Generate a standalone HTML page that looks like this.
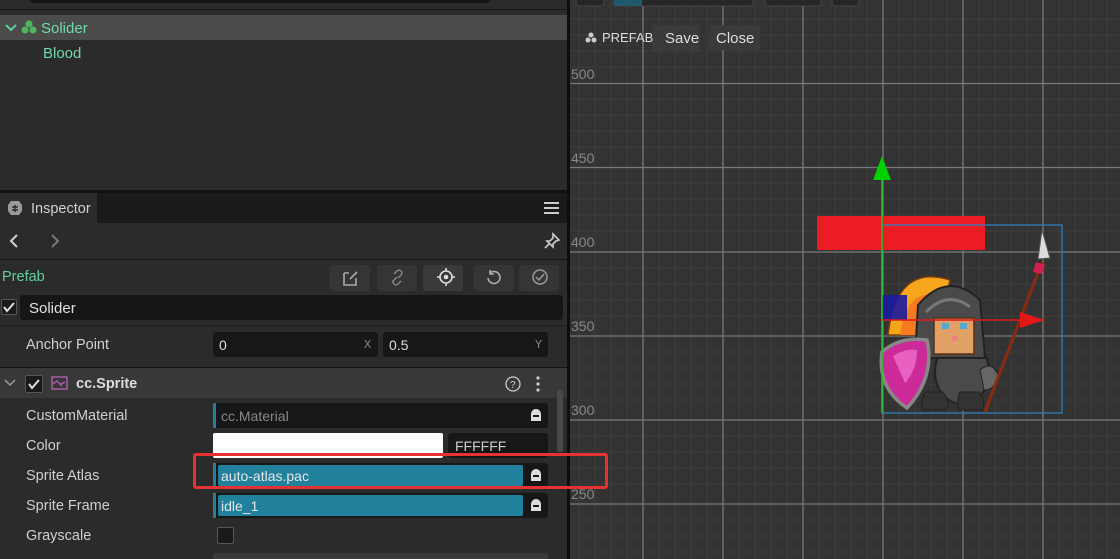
<!DOCTYPE html>
<html><head><meta charset="utf-8"><style>
*{box-sizing:border-box;margin:0;padding:0}
html,body{width:1120px;height:559px;overflow:hidden}
body{background:#2b2b2b;font-family:"Liberation Sans",Arial,sans-serif;font-size:14px;color:#ccc;position:relative}
.a{position:absolute}
.lbl{position:absolute;left:26px;font-size:14.5px;color:#cfcfcf}
.inp{position:absolute;background:#171717;border-radius:3px}
.btn{position:absolute;top:265px;width:40px;height:26px;background:#353535;border-radius:3px}
</style></head><body>
<div class="a" style="left:0;top:0;width:567px;height:559px;background:#2b2b2b"></div>
<div class="a" style="left:30px;top:0;width:460px;height:3px;background:#151515;border-radius:0 0 3px 3px"></div>
<div class="a" style="left:0;top:9px;width:567px;height:1px;background:#181818"></div>
<div class="a" style="left:0;top:15px;width:567px;height:25px;background:#4b4b4b"></div>
<svg class="a" style="left:5px;top:23px" width="12" height="10"><path d="M1 2 L6 7 L11 2" stroke="#5fcf9a" stroke-width="2" fill="none"/></svg>
<svg class="a" style="left:21px;top:19px" width="16" height="17"><circle cx="8" cy="5" r="3.5" fill="#4fb55f"/><circle cx="4" cy="11" r="3.5" fill="#4fb55f"/><circle cx="12" cy="11" r="3.5" fill="#4fb55f"/></svg>
<div class="a" style="left:41px;top:20px;font-size:15px;color:#6fd9a8">Solider</div>
<div class="a" style="left:43px;top:45px;font-size:15px;color:#6fd9a8">Blood</div>
<div class="a" style="left:0;top:190px;width:567px;height:3px;background:#121212"></div>
<div class="a" style="left:0;top:193px;width:567px;height:30px;background:#1a1a1a"></div>
<div class="a" style="left:0;top:193px;width:97px;height:30px;background:#2b2b2b"></div>
<svg class="a" style="left:7px;top:200px" width="16" height="16"><path d="M4 1h8l3 4v6l-3 4h-8l-3-4v-6z" fill="#9a9a9a"/><path d="M5 7h6M5 10h6M8 5v7" stroke="#2b2b2b" stroke-width="1.4"/></svg>
<div class="a" style="left:31px;top:201px;font-size:14.5px;color:#d0d0d0">Inspector</div>
<div class="a" style="left:544px;top:202px;width:15px;height:2px;background:#ccc;box-shadow:0 5px 0 #ccc,0 10px 0 #ccc"></div>
<svg class="a" style="left:6px;top:232px" width="60" height="18"><path d="M11 3 L5 9 L11 15" stroke="#cfcfcf" stroke-width="2" fill="none"/><path d="M46 3 L52 9 L46 15" stroke="#777" stroke-width="2" fill="none"/></svg>
<svg class="a" style="left:543px;top:232px" width="18" height="18"><path d="M10 2l6 6-3 1-3 3 0 3-6-6 3 0 3-3z M6 12l-4 4" stroke="#ccc" stroke-width="1.6" fill="none"/></svg>
<div class="a" style="left:0;top:259px;width:567px;height:1px;background:#141414"></div>
<div class="a" style="left:2px;top:269px;font-size:14.5px;color:#5fcf9a">Prefab</div>
<div class="btn" style="left:330px"></div><div class="btn" style="left:377px"></div><div class="btn" style="left:423px;background:#3a3a3a"></div><div class="btn" style="left:474px"></div><div class="btn" style="left:519px"></div>
<svg class="a" style="left:330px;top:265px" width="230" height="26">
<path d="M14 8h5M14 8v12h12v-7M20 14l7-7" stroke="#aaa" stroke-width="1.6" fill="none"/>
<path d="M62 17l5-5M64 9l3-3a2 2 0 0 1 4 4l-3 3M71 16l-3 3a2 2 0 0 1-4-4l3-3" stroke="#888" stroke-width="1.4" fill="none"/>
<circle cx="116" cy="12" r="6" stroke="#ddd" stroke-width="1.6" fill="none"/><circle cx="116" cy="12" r="2.3" fill="#ddd"/><path d="M116 3v3M116 18v3M107 12h3M122 12h3" stroke="#ddd" stroke-width="1.6"/>
<path d="M160 8a6 6 0 1 1-2 5M160 5v4h4" stroke="#aaa" stroke-width="1.6" fill="none"/>
<circle cx="210" cy="12" r="7" stroke="#999" stroke-width="1.5" fill="none"/><path d="M206 12l3 3 5-6" stroke="#999" stroke-width="1.5" fill="none"/>
</svg>
<div class="a" style="left:1px;top:299px;width:16px;height:16px;background:#1a1a1a;border:1px solid #555;border-radius:2px"></div>
<svg class="a" style="left:2px;top:300px" width="14" height="14"><path d="M2 7l3 4 7-8" stroke="#ddd" stroke-width="2" fill="none"/></svg>
<div class="inp" style="left:20px;top:295px;width:543px;height:25px;background:#161616"></div>
<div class="a" style="left:29px;top:300px;font-size:15px;color:#e0e0e0">Solider</div>
<div class="a" style="left:0;top:325px;width:567px;height:1px;background:#1e1e1e"></div>
<div class="lbl" style="top:337px">Anchor Point</div>
<div class="inp" style="left:213px;top:332px;width:165px;height:25px"></div>
<div class="inp" style="left:383px;top:332px;width:165px;height:25px"></div>
<div class="a" style="left:219px;top:337px;color:#ddd">0</div><div class="a" style="left:364px;top:338px;color:#888;font-family:'Liberation Mono';font-size:12px">X</div>
<div class="a" style="left:389px;top:337px;color:#ddd">0.5</div><div class="a" style="left:535px;top:338px;color:#888;font-family:'Liberation Mono';font-size:12px">Y</div>
<div class="a" style="left:0;top:367px;width:567px;height:1px;background:#141414"></div>
<div class="a" style="left:0;top:368px;width:567px;height:30px;background:#383838"></div>
<svg class="a" style="left:4px;top:378px" width="12" height="10"><path d="M1 2 L6 7 L11 2" stroke="#999" stroke-width="1.5" fill="none"/></svg>
<div class="a" style="left:25px;top:375px;width:18px;height:18px;background:#1a1a1a;border:1px solid #555;border-radius:2px"></div>
<svg class="a" style="left:27px;top:377px" width="14" height="14"><path d="M2 7l3 4 7-8" stroke="#ddd" stroke-width="2" fill="none"/></svg>
<svg class="a" style="left:51px;top:376px" width="18" height="15"><rect x="1" y="1" width="15" height="12" stroke="#b060b0" stroke-width="1.4" fill="none"/><path d="M2 8l4-3 5 5M10 8l4-2" stroke="#b060b0" stroke-width="1.3" fill="none"/></svg>
<div class="a" style="left:76px;top:376px;font-weight:bold;font-size:14.5px;color:#ddd">cc.Sprite</div>
<svg class="a" style="left:504px;top:375px" width="40" height="18"><circle cx="9" cy="9" r="7" stroke="#ccc" stroke-width="1.3" fill="none"/><text x="6" y="13" font-size="10" fill="#ccc" font-family="Liberation Sans">?</text><circle cx="34" cy="3" r="1.6" fill="#ccc"/><circle cx="34" cy="9" r="1.6" fill="#ccc"/><circle cx="34" cy="15" r="1.6" fill="#ccc"/></svg>
<div class="a" style="left:557px;top:390px;width:6px;height:62px;background:#4a4a4a;border-radius:2px"></div>
<div class="lbl" style="top:408px">CustomMaterial</div>
<div class="inp" style="left:213px;top:403px;width:335px;height:25px"></div>
<div class="a" style="left:213px;top:403px;width:3px;height:25px;background:#2a7f99;border-radius:2px 0 0 2px"></div>
<div class="a" style="left:221px;top:408px;color:#888">cc.Material</div>
<div class="lbl" style="top:438px">Color</div>
<div class="a" style="left:213px;top:433px;width:230px;height:25px;background:#fff;border-radius:2px"></div>
<div class="inp" style="left:448px;top:433px;width:100px;height:25px"></div>
<div class="a" style="left:455px;top:438px;color:#ccc">FFFFFF</div>
<div class="lbl" style="top:468px">Sprite Atlas</div>
<div class="inp" style="left:213px;top:463px;width:335px;height:25px"></div>
<div class="a" style="left:213px;top:463px;width:3px;height:25px;background:#2a7f99"></div>
<div class="a" style="left:218px;top:465px;width:305px;height:21px;background:#21809c;border-radius:2px"></div>
<div class="a" style="left:221px;top:468px;color:#e6e6e6">auto-atlas.pac</div>
<div class="lbl" style="top:498px">Sprite Frame</div>
<div class="inp" style="left:213px;top:493px;width:335px;height:25px"></div>
<div class="a" style="left:213px;top:493px;width:3px;height:25px;background:#2a7f99"></div>
<div class="a" style="left:218px;top:495px;width:305px;height:21px;background:#21809c;border-radius:2px"></div>
<div class="a" style="left:221px;top:498px;color:#e6e6e6">idle_1</div>
<svg class="a" style="left:529px;top:408px" width="14" height="110"><g fill="#ddd"><path d="M2 6a5 5 0 0 1 10 0v7h-10z"/><path d="M2 66a5 5 0 0 1 10 0v7h-10z"/><path d="M2 96a5 5 0 0 1 10 0v7h-10z"/></g><g fill="#171717"><rect x="4" y="7" width="6" height="2"/><rect x="4" y="67" width="6" height="2"/><rect x="4" y="97" width="6" height="2"/></g></svg>
<div class="lbl" style="top:528px">Grayscale</div>
<div class="a" style="left:217px;top:527px;width:17px;height:17px;background:#1a1a1a;border:1px solid #555;border-radius:2px"></div>
<div class="inp" style="left:213px;top:553px;width:335px;height:10px;background:#3a3a3a"></div>
<div class="a" style="left:567px;top:0;width:3px;height:559px;background:#0e0e0e"></div>
<svg class="a" style="left:570px;top:0" width="550" height="559">
<rect width="550" height="559" fill="#333"/>
<g stroke="#3d3d3d" stroke-width="1">
<path d="M9 0V559M25 0V559M41 0V559M57 0V559M89 0V559M105 0V559M121 0V559M137 0V559M169 0V559M185 0V559M201 0V559M217 0V559M249 0V559M265 0V559M281 0V559M297 0V559M329 0V559M345 0V559M361 0V559M377 0V559M409 0V559M425 0V559M441 0V559M457 0V559M489 0V559M505 0V559M521 0V559M537 0V559"/>
<path d="M0 19H550M0 35H550M0 51H550M0 67H550M0 99H550M0 115H550M0 131H550M0 147H550M0 183H550M0 199H550M0 215H550M0 231H550M0 268H550M0 284H550M0 300H550M0 316H550M0 352H550M0 368H550M0 384H550M0 400H550M0 436H550M0 452H550M0 468H550M0 484H550M0 520H550M0 536H550M0 552H550"/>
</g>
<g stroke="#7a7a7a" stroke-width="1.3">
<path d="M73 0V559M153 0V559M233 0V559M313 0V559M393 0V559M473 0V559"/>
<path d="M0 83.5H550M0 167.5H550M0 252H550M0 336H550M0 420H550M0 504H550"/>
</g>
<g fill="#888" font-family="Liberation Sans" font-size="14"><text x="1" y="79">500</text><text x="1" y="163">450</text><text x="1" y="247">400</text><text x="1" y="331">350</text><text x="1" y="415">300</text><text x="1" y="499">250</text></g>
<g fill="#262626" stroke="#444"><rect x="6" y="-4" width="28" height="10" rx="3"/><rect x="43" y="-4" width="140" height="10" rx="3"/><rect x="195" y="-4" width="56" height="10" rx="3"/><rect x="262" y="-4" width="27" height="10" rx="3"/></g>
<rect x="44" y="-4" width="28" height="10" fill="#1e5a6c"/>
<rect x="82" y="25" width="48" height="25" rx="2" fill="#3a3a3a"/><rect x="139" y="25" width="51" height="25" rx="2" fill="#3a3a3a"/>
<g fill="#ccc"><circle cx="21" cy="35" r="2.5"/><circle cx="18" cy="40" r="2.5"/><circle cx="24" cy="40" r="2.5"/></g>
<g font-family="Liberation Sans" fill="#ddd"><text x="32" y="42" font-size="13">PREFAB</text><text x="95" y="43" font-size="15">Save</text><text x="146" y="43" font-size="15">Close</text></g>
<rect x="247" y="216" width="168" height="34" fill="#ec1c24"/>
<rect x="312" y="225" width="180" height="188" fill="none" stroke="#2b80c0" stroke-width="1.3"/>
<path d="M318 335 q8-72 62-55 l-12 55z" fill="#f6a61a" stroke="#7a3a10" stroke-width="1.5"/>
<path d="M330 335 q6-45 35-40 l-6 40z" fill="#f47b20"/>
<ellipse cx="392" cy="372" rx="27" ry="32" fill="#4a4a4a" stroke="#222" stroke-width="2"/>
<path d="M348 305 q30-35 62 -5 l5 58 h-70z" fill="#4a4a4a" stroke="#222" stroke-width="2"/>
<path d="M356 312 q22-22 44 -5" stroke="#777" stroke-width="3" fill="none"/>
<rect x="364" y="318" width="40" height="36" fill="#e0a066" stroke="#5a3010" stroke-width="1.5"/>
<rect x="372" y="323" width="7" height="6" fill="#5ac"/><rect x="390" y="323" width="7" height="6" fill="#5ac"/>
<rect x="382" y="336" width="6" height="5" fill="#f08080"/>
<path d="M410 370 q12-10 18 5 q-2 15 -14 15z" fill="#666" stroke="#222"/>
<path d="M356 392 q-8 12 -2 18h22q5-8 -3-18z M390 392 q-5 12 0 18h22q5-8 -3-18z" fill="#333" stroke="#222"/>
<path d="M312 352 q18-16 45-12 q8 38 -20 68 q-30-20 -25-56z" fill="#cc2a99" stroke="#888" stroke-width="3.5"/>
<path d="M323 356 q12-8 24-6 q0 20 -12 33z" fill="#e860c0"/>
<path d="M472 230 l8 28 -12 1z" fill="#ddd" stroke="#555"/>
<path d="M472 262 l-57 150" stroke="#8a2a10" stroke-width="3"/>
<path d="M466 262 l9 3 -3 9 -9-2z" fill="#d02050"/>
<rect x="312" y="295" width="25" height="25" fill="#1a1aa0" opacity="0.9"/>
<path d="M312 160V413" stroke="#1ec81e" stroke-width="1.5"/>
<path d="M303 180 l9-24 9 24z" fill="#00d000"/>
<path d="M312 320H455" stroke="#e01818" stroke-width="1.5"/>
<path d="M450 312 l25 8 -25 8z" fill="#e01818"/>
</svg>
<div class="a" style="left:193px;top:453px;width:415px;height:36px;border:3px solid #e53232;border-radius:3px"></div>
</body></html>
